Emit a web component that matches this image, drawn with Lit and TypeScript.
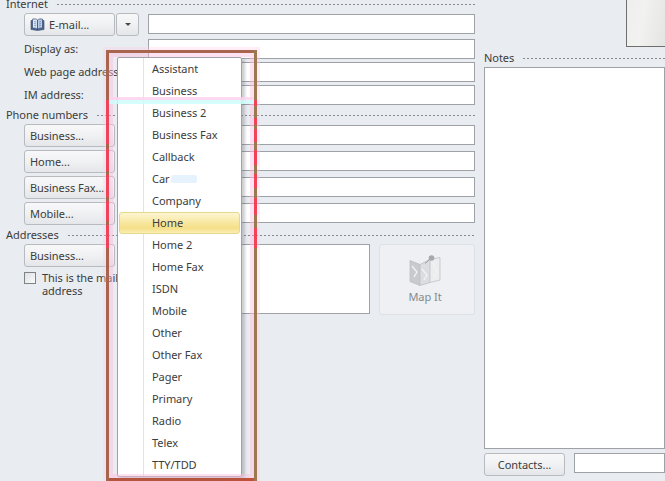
import { LitElement, html, css, svg } from "lit";
import { customElement } from "lit/decorators.js";

const MENU = ["Assistant","Business","Business 2","Business Fax","Callback","Car","Company","Home","Home 2","Home Fax","ISDN","Mobile","Other","Other Fax","Pager","Primary","Radio","Telex","TTY/TDD"];

const RED = "#ee4358";
function segments(base: string, reds: [number, number][], start: number, end: number, dir = "to bottom") {
  const stops: string[] = [];
  for (const [a, b] of reds) {
    stops.push(`${base} ${a - start}px`, `${RED} ${a - start}px`, `${RED} ${b - start}px`, `${base} ${b - start}px`);
  }
  stops.push(`${base} ${end - start}px`);
  return `background:linear-gradient(${dir},${stops.join(",")})`;
}
const LEFT_EDGE = segments("#a8654d", [[100,144],[149,171],[175,197],[201,221],[225,248]], 50, 481);
const RIGHT_EDGE = segments("#9a7850", [[100,106],[118,125],[129,142],[150,165],[174,188],[198,215],[228,248]], 50, 481);

const bookIcon = svg`<svg width="15" height="13" viewBox="0 0 15 13">
  <path d="M1 2.5 L1 11.5 L7.5 12.5 L14 11.5 L14 2.5 L12.5 2.5 L12.5 10 L8 11 L7 11 L2.5 10 L2.5 2.5 Z" fill="#4a6c9c" stroke="#33466a" stroke-width=".6"/>
  <path d="M2.5 1.2 C4.5 .6 6.5 1 7.5 2 L7.5 11 C6.3 10.2 4.5 9.8 2.5 10.2 Z" fill="#dfe9f6" stroke="#33466a" stroke-width=".7"/>
  <path d="M12.5 1.2 C10.5 .6 8.5 1 7.5 2 L7.5 11 C8.7 10.2 10.5 9.8 12.5 10.2 Z" fill="#b9cde8" stroke="#33466a" stroke-width=".7"/>
  <path d="M4 3.5 L6.3 4 M4 5.5 L6.3 6 M4 7.5 L6.3 8 M9 4 L11 3.5 M9 6 L11 5.5 M9 8 L11 7.5" stroke="#5a7cab" stroke-width=".7" fill="none"/>
</svg>`;

const mapIcon = svg`<svg width="32" height="31" viewBox="0 0 32 31">
  <path d="M1 5.5 L11 9.5 L21 4.5 L31 2.5 L31 25 L21 27.5 L11 30.5 L1 26.5 Z" fill="#d6d7d9"/>
  <path d="M1 5.500 L11 9.500 L11 30.500 L1 26.500 Z" fill="#c9cacd"/>
  <path d="M11 9.500 L21 4.500 L21 27.500 L11 30.500 Z" fill="#dcdde0"/>
  <path d="M21 4.500 L31 2.500 L31 25 L21 27.500 Z" fill="#ecedef"/>
  <path d="M3 11 L8 17 L5 22 M13 14 L18 20 L15 25 M24 8 L28 17 L25 22" stroke="#f1f2f3" stroke-width="1.400" fill="none"/>
  <path d="M1 5.500 L11 9.500 L21 4.500 L31 2.500 L31 25 L21 27.500 L11 30.500 L1 26.500 Z M11 9.500 L11 30.500 M21 4.500 L21 27.500" fill="none" stroke="#b9bbbe" stroke-width=".7"/>
  <path d="M22 3 L16 8.500" stroke="#95989c" stroke-width="1"/>
  <circle cx="22.500" cy="3" r="2.800" fill="#a5a8ac"/>
</svg>`;

@customElement("app-root")
export class AppRoot extends LitElement {
  static styles = css`
    :host {
      display: block; position: relative; width: 665px; height: 481px; overflow: hidden;
      background: #e9ecf1; color: #3c3c3c;
      font: 11px/14px "Noto Sans", "Open Sans", sans-serif;
      letter-spacing: -0.05px;
    }
    .page { display: flex; gap: 9px; height: 481px; }
    .left { width: 475px; flex: none; margin-top: -3px; padding-left: 6px; box-sizing: border-box; display: flex; flex-direction: column; }
    .right { width: 181px; flex: none; display: flex; flex-direction: column; }
    .head { display: flex; align-items: center; gap: 9px; height: 14px; flex: none; }
    .dash { flex: 1; height: 1px; background: repeating-linear-gradient(to right, #85888c 0 2px, transparent 2px 4px); }
    .row { display: flex; align-items: flex-start; padding-left: 18px; flex: none; }
    .row.first { margin-top: 2px; height: 23px; }
    .row.first .input { margin-top: 1px; }
    .row.field { height: 20px; margin-top: 3px; align-items: center; }
    .row.btn { height: 23px; margin-top: 3px; }
    .label { width: 124px; flex: none; white-space: nowrap; overflow: hidden; }
    .btncell { width: 124px; flex: none; display: flex; gap: 1px; }
    .input { flex: 1; height: 20px; box-sizing: border-box; background: #fff; border: 1px solid #9ea2a6; }
    .btn .input { margin-top: 1px; }
    .b {
      box-sizing: border-box; height: 23px; width: 91px; padding-left: 5px; display: flex; align-items: center; gap: 4px;
      border: 1px solid #b7bbc0; border-radius: 3px; white-space: nowrap;
      background: linear-gradient(#f8f8f9, #f1f2f4 45%, #e4e6e9);
    }
    .b.arrow { width: 23px; padding: 0; justify-content: center; }
    .tri { width: 0; height: 0; border: 3px solid transparent; border-top: 3px solid #4a4a4a; border-bottom: 0; }
    .phones { margin-top: -1px; }
    .spaced { margin-top: 3px; }
    .addr { display: flex; padding-left: 18px; margin-top: 2px; flex: none; }
    .addr-left { width: 124px; flex: none; display: flex; flex-direction: column; }
    .check { display: flex; gap: 6px; margin-top: 4px; line-height: 13px; }
    .box { width: 12px; height: 12px; flex: none; box-sizing: border-box; margin-top: 1px; border: 1px solid #7f8388; background: linear-gradient(135deg, #dfe1e4, #fafafa); }
    .area { width: 222px; height: 70px; box-sizing: border-box; background: #fff; border: 1px solid #9ea2a6; flex: none; }
    .map {
      width: 96px; height: 71px; box-sizing: border-box; margin-left: 9px; flex: none; padding: 10px 4px 0 0;
      display: flex; flex-direction: column; align-items: center; gap: 4px;
      background: #eef0f4; border: 1px solid #dde0e5; border-radius: 3px; color: #85898e;
    }
    .photo {
      align-self: flex-end; width: 39px; height: 47px; box-sizing: border-box; flex: none;
      border-left: 1px solid #6e6e6e; border-bottom: 1px solid #6e6e6e;
      background: linear-gradient(100deg, #eeeeee, #f2f2f1 40%, #e4e4e3);
    }
    .notes-head { margin-top: 4px; }
    .notes { height: 382px; margin-top: 2px; flex: none; box-sizing: border-box; background: #fff; border: 1px solid #9ea2a6; }
    .contacts { display: flex; align-items: flex-start; gap: 9px; margin-top: 4px; flex: none; }
    .contacts .b { width: 81px; padding: 0; justify-content: center; }
    .menu {
      position: absolute; left: 117px; top: 57px; width: 125px; height: 420px; box-sizing: border-box;
      background: linear-gradient(to right, #fff 25px, #e2e3e5 25px 26px, #fff 26px);
      border: 1px solid #9fa3a8; border-radius: 2px; box-shadow: 3px 2px 3px rgba(90,90,100,.3);
    }
    .item { height: 22px; display: flex; align-items: center; padding-left: 33px; margin: 0 1px; box-sizing: border-box; }
    .item.on {
      padding-left: 32px; border: 1px solid #e3d88b; border-radius: 3px;
      background: linear-gradient(#fdf6d3, #f8e79f 50%, #f5df88 75%, #fbeeb4);
    }
    .ghost { width: 26px; height: 8px; background: #e6f2fd; border-radius: 2px; margin-left: 1px; }
    .mark { position: absolute; left: 106px; top: 50px; width: 151px; height: 431px; box-shadow: 0 0 0 3px rgba(255,205,232,.35); pointer-events: none; }
    .halo { position: absolute; inset: 0; box-shadow: inset 0 0 0 7px rgba(255,190,225,.45); }
    .edge { position: absolute; }
    .top { left: 0; right: 0; top: 0; height: 3px; background: linear-gradient(to right, #a8654d 95%, #9a7850); }
    .bottom { left: 0; right: 0; bottom: 0; height: 3px; background: linear-gradient(to right, #b5553f 80%, #c2503a); }
    .l { left: 0; top: 0; bottom: 0; width: 3px; }
    .r { right: 0; top: 0; bottom: 0; width: 3px; }
    .band { position: absolute; left: 3px; right: 3px; top: 47px; height: 7px; background: linear-gradient(#ffd2ef 0 3px, #cdfdfb 3px); opacity: .85; }
  `;

  private button(t: string) {
    return html`<div class="row btn"><div class="btncell"><div class="b">${t}</div></div><div class="input"></div></div>`;
  }
  private field(t: string) {
    return html`<div class="row field"><div class="label">${t}</div><div class="input"></div></div>`;
  }

  render() {
    return html`
      <div class="page">
        <div class="left">
          <div class="head"><span>Internet</span><div class="dash"></div></div>
          <div class="row first">
            <div class="btncell"><div class="b">${bookIcon}<span>E-mail...</span></div><div class="b arrow"><div class="tri"></div></div></div>
            <div class="input"></div>
          </div>
          ${this.field("Display as:")}
          ${this.field("Web page address:")}
          ${this.field("IM address:")}
          <div class="head spaced"><span>Phone numbers</span><div class="dash"></div></div>
          <div class="phones">
            ${["Business...", "Home...", "Business Fax...", "Mobile..."].map((t) => this.button(t))}
          </div>
          <div class="head spaced"><span>Addresses</span><div class="dash"></div></div>
          <div class="addr">
            <div class="addr-left">
              <div class="b">Business...</div>
              <div class="check"><div class="box"></div><div>This is the mailing address</div></div>
            </div>
            <div class="area"></div>
            <div class="map">${mapIcon}<span>Map It</span></div>
          </div>
        </div>
        <div class="right">
          <div class="photo"></div>
          <div class="head notes-head"><span>Notes</span><div class="dash"></div></div>
          <div class="notes"></div>
          <div class="contacts"><div class="b">Contacts...</div><div class="input"></div></div>
        </div>
      </div>
      <div class="menu">
        ${MENU.map((m) => html`<div class="item ${m === "Home" ? "on" : ""}">${m}${m === "Car" ? html`<div class="ghost"></div>` : ""}</div>`)}
      </div>
      <div class="mark">
        <div class="halo"></div>
        <div class="band"></div>
        <div class="edge top"></div>
        <div class="edge bottom"></div>
        <div class="edge l" style=${LEFT_EDGE}></div>
        <div class="edge r" style=${RIGHT_EDGE}></div>
      </div>
    `;
  }
}
